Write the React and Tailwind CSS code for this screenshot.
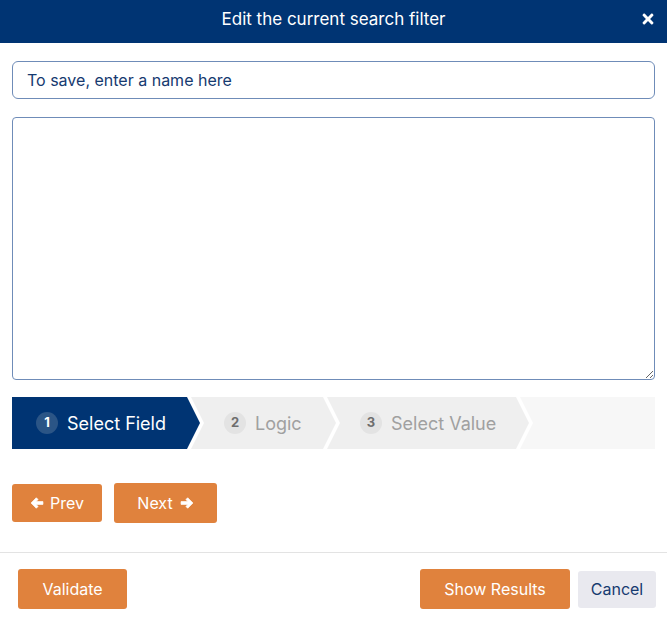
import { FaTimes } from "react-icons/fa";

const steps = [
  { n: 1, label: "Select Field", active: true, width: "w-[188px]", first: true },
  { n: 2, label: "Logic", width: "w-[145px]" },
  { n: 3, label: "Select Value", width: "w-[202px]" },
];

// chunky arrow like the old font-awesome one
function Arrow({ flip }) {
  return (
    <svg viewBox="0 0 16 16" className={`w-[14px] h-[14px] ${flip ? "rotate-180" : ""}`}>
      <path
        d="M7.2 2 L1.2 8 L7.2 14 L9.3 11.9 L6.8 9.6 H14.8 V6.4 H6.8 L9.3 4.1 Z"
        fill="currentColor"
        stroke="currentColor"
        strokeWidth="0.8"
        strokeLinejoin="round"
      />
    </svg>
  );
}

export default function App() {
  return (
    <div className="w-[667px] h-[622px] bg-white flex flex-col font-['Inter',sans-serif] overflow-hidden">
      {/* Header */}
      <div className="h-[43px] bg-[#003473] flex items-center justify-center relative shrink-0 pb-[4px]">
        <span className="text-white text-[17px]">Edit the current search filter</span>
        <FaTimes className="absolute right-[12px] top-[11px] text-white w-[14px] h-[16px]" />
      </div>

      {/* Body */}
      <div className="px-[12px] pt-[18px] flex flex-col">
        <input
          className="h-[38px] w-full border border-[#6f8cb8] rounded-[6px] px-[14px] text-[16px] text-[#163a70] placeholder:text-[#163a70] outline-none"
          placeholder="To save, enter a name here"
        />
        <textarea className="mt-[18px] h-[263px] w-full border border-[#6f8cb8] rounded-[4px] p-2 outline-none" />

        {/* Steps */}
        <div className="mt-[17px] flex h-[52px]">
          {steps.map((s) => (
            <div
              key={s.n}
              className={`${s.width} shrink-0 flex items-center gap-[9px] ${
                s.first
                  ? "pl-[24px] bg-[#003473] [clip-path:polygon(0_0,calc(100%-13px)_0,100%_50%,calc(100%-13px)_100%,0_100%)]"
                  : "-ml-[9px] pl-[33px] bg-[#efefef] [clip-path:polygon(0_0,calc(100%-13px)_0,100%_50%,calc(100%-13px)_100%,0_100%,13px_50%)]"
              }`}
            >
              <span
                className={`w-[22px] h-[22px] rounded-full flex items-center justify-center text-[13px] font-bold ${
                  s.active ? "bg-[#2b5586] text-white" : "bg-[#e3e3e3] text-[#6e6e6e]"
                }`}
              >
                {s.n}
              </span>
              <span className={`text-[18px] ${s.active ? "text-white" : "text-[#a0a0a0]"}`}>{s.label}</span>
            </div>
          ))}
          <div className="flex-1 -ml-[9px] bg-[#f7f7f7] [clip-path:polygon(0_0,100%_0,100%_100%,0_100%,13px_50%)]" />
        </div>

        {/* Prev / Next */}
        <div className="mt-[34px] flex items-center gap-[12px]">
          <button className="h-[38px] w-[90px] bg-[#e0823d] rounded-[3px] text-white text-[16px] flex items-center justify-center gap-[6px]">
            <Arrow />
            Prev
          </button>
          <button className="h-[40px] w-[103px] bg-[#e0823d] rounded-[3px] text-white text-[16px] flex items-center justify-center gap-[7px]">
            Next
            <Arrow flip />
          </button>
        </div>
      </div>

      {/* Footer */}
      <div className="mt-[29px] border-t border-[#e3e3e3] px-[11px] pt-[16px] flex items-center">
        <button className="ml-[7px] h-[40px] w-[109px] bg-[#e0823d] rounded-[3px] text-white text-[16px]">
          Validate
        </button>
        <div className="flex-1" />
        <button className="h-[40px] w-[150px] bg-[#e0823d] rounded-[3px] text-white text-[16px]">
          Show Results
        </button>
        <button className="ml-[8px] h-[37px] w-[78px] bg-[#e9e9ef] rounded-[3px] text-[#163a70] text-[16px]">
          Cancel
        </button>
      </div>
    </div>
  );
}
